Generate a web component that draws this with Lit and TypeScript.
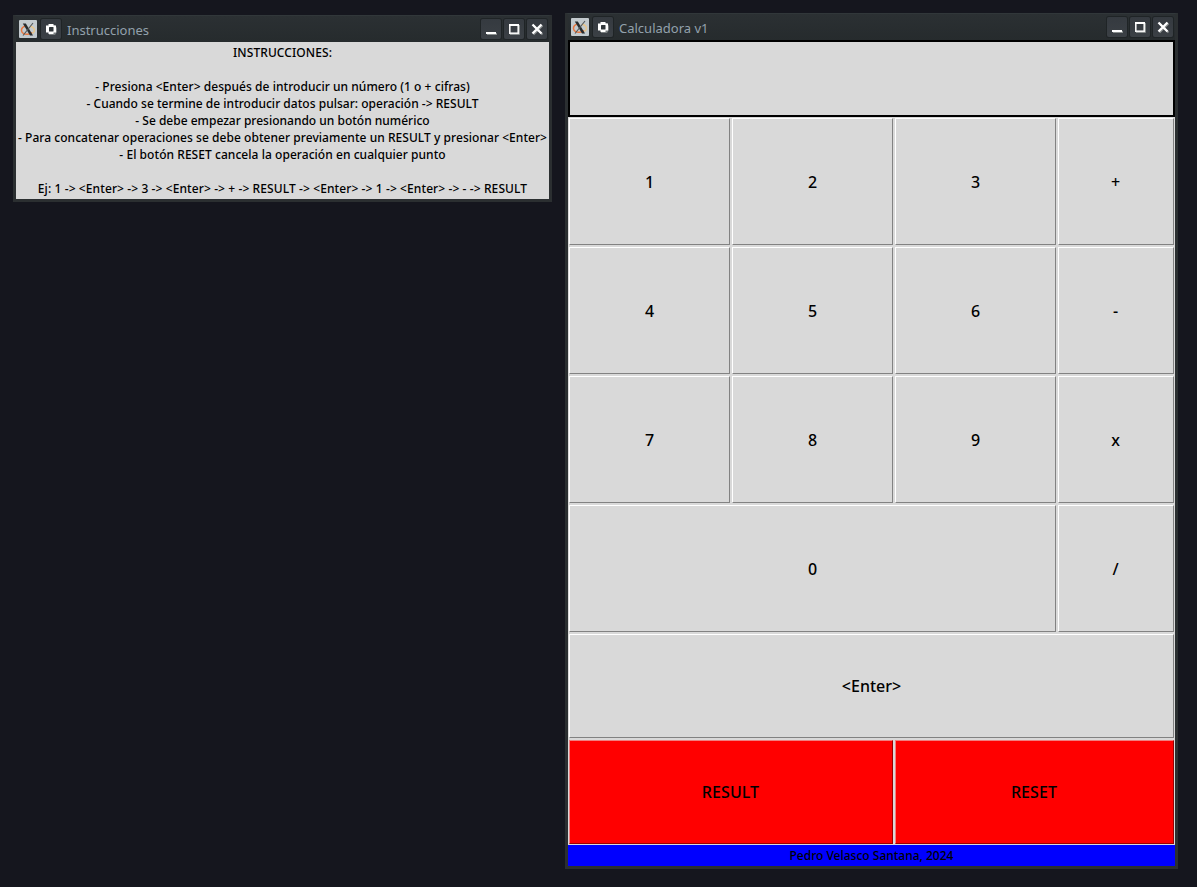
import { LitElement, html, css, svg } from "lit";
import { customElement, property } from "lit/decorators.js";
import { styleMap } from "lit/directives/style-map.js";

@customElement("x-window")
class XWindow extends LitElement {
  @property() caption = "";

  static styles = css`
    :host {
      display: block;
      box-sizing: border-box;
      background: #292e30;
      border: solid #2b2f31;
      border-width: 0 3px 3px;
      border-top: 1px solid #31373a;
    }
    .bar {
      display: flex;
      align-items: center;
      height: 26px;
      box-sizing: border-box;
      padding: 3px 2px 3px 3px;
      background: linear-gradient(#2b3033, #262b2d);
      color: #93a1ac;
      font: 13px/20px "Noto Sans", sans-serif;
    }
    svg {
      display: block;
      flex: none;
    }
    .logo {
      margin-right: 4px;
    }
    .caption {
      flex: 1;
      padding: 2px 0 0 6px;
      white-space: nowrap;
    }
    .tools {
      display: flex;
      gap: 3px;
    }
    .tool {
      width: 20px;
      height: 20px;
      box-sizing: border-box;
      border-radius: 2px;
      background: linear-gradient(#353a40, #3b4045);
      box-shadow: 0 0 0 1px #1f2426;
    }
  `;

  private tool(shape: unknown) {
    return html`<div class="tool"><svg width="20" height="20" viewBox="0 0 20 20">${shape}</svg></div>`;
  }

  render() {
    return html`
      <div class="bar">
        <svg class="logo" width="18" height="18" viewBox="0 0 18 18">
          <rect width="18" height="18" rx="1" fill="#c3cace" />
          <path d="M7 6Q2.2 7 2.5 10.5Q3 14.5 8.5 14.3Q12 14 13 12.5" fill="none" stroke="#e9773f" stroke-width="1.5" />
          <path d="M11 6.3Q16.3 7.5 15.3 11.5L13.5 13.5" fill="none" stroke="#e8c58c" stroke-width="1.5" />
          <path d="M3.8 3.5H6.8L14 15.5H11Z" fill="#272b2d" />
          <path d="M14 3L4 15.5" stroke="#53595b" stroke-width="1.2" />
        </svg>
        ${this.tool(svg`
          <path d="M8 6h6l2 3v4l-2 3H8z" fill="#777c7e"/>
          <path d="M7.5 5h5v1.5H15v7h-2.500V15h-5v-1.500H5v-7h2.500z" fill="#fff"/>
          <rect x="8" y="8" width="4.500" height="4.500" rx="0.500" fill="#30363a"/>`)}
        <div class="caption">${this.caption}</div>
        <div class="tools">
          ${this.tool(svg`
            <rect x="6" y="14" width="10" height="2" fill="#888d8d"/>
            <rect x="5" y="13" width="10" height="2" fill="#fff"/>`)}
          ${this.tool(svg`
            <path d="M6 15.5h9.5V6" fill="none" stroke="#888d8d"/>
            <rect x="5.8" y="6" width="8.4" height="8.2" fill="none" stroke="#f4f4f4" stroke-width="1.6"/>
            <rect x="5" y="5" width="10" height="2" fill="#fff"/>`)}
          ${this.tool(svg`
            <path d="M6.5 6.5L15.5 15.5M15.5 6.5L6.5 15.5" stroke="#888d8d" stroke-width="1.8"/>
            <path d="M5.5 5.5L14.5 14.5M14.5 5.5L5.5 14.5" stroke="#fff" stroke-width="2.3"/>`)}
        </div>
      </div>
      <slot></slot>
    `;
  }
}

// Each line with its tracking in pixels.
const LINES: [string, number][] = [
  ["INSTRUCCIONES:", 0.08],
  ["", 0],
  ["- Presiona <Enter> después de introducir un número (1 o + cifras)", 0.047],
  ["- Cuando se termine de introducir datos pulsar: operación -> RESULT", 0.02],
  ["- Se debe empezar presionando un botón numérico", 0],
  ["- Para concatenar operaciones se debe obtener previamente un RESULT y presionar <Enter>", 0.047],
  ["- El botón RESET cancela la operación en cualquier punto", 0.05],
  ["", 0],
  ["Ej: 1 -> <Enter> -> 3 -> <Enter> -> + -> RESULT -> <Enter> -> 1 -> <Enter> -> - -> RESULT", 0.1],
];

const KEYS = ["1", "2", "3", "+", "4", "5", "6", "-", "7", "8", "9", "x", "0", "/", "<Enter>", "RESULT", "RESET"];
const KIND: Record<string, string> = {
  "+": "op",
  "-": "op",
  x: "op",
  "/": "op",
  "0": "zero",
  "<Enter>": "enter",
  RESULT: "red",
  RESET: "red",
};

@customElement("app-root")
class AppRoot extends LitElement {
  static styles = css`
    :host {
      display: flex;
      align-items: flex-start;
      gap: 13px;
      box-sizing: border-box;
      width: 1197px;
      height: 887px;
      padding: 13px 0 0 13px;
      overflow: hidden;
      background: #15161e;
      color: #000;
      font-family: "Noto Sans", sans-serif;
      font-weight: 500;
    }
    .help {
      width: 539px;
      margin-top: 2px;
    }
    .calc {
      width: 613px;
    }
    .text {
      height: 157px;
      box-sizing: border-box;
      padding-top: 2px;
      background: #d9d9d9;
      font-size: 12px;
      line-height: 17px;
      text-align: center;
    }
    .line {
      height: 17px;
      white-space: pre;
    }
    .display {
      height: 77px;
      box-sizing: border-box;
      border: 2px solid #000;
      background: #d9d9d9;
    }
    .keys {
      display: grid;
      grid-template-columns: repeat(3, 161px) 116px;
      grid-template-rows: repeat(4, 127px) 104px 104px;
      gap: 2px;
      padding: 1px;
      background: #d9d9d9;
    }
    .key {
      box-sizing: border-box;
      margin: 0;
      padding: 0;
      border: 1px solid;
      border-color: #fff #828282 #828282 #fff;
      border-radius: 0;
      background: #d9d9d9;
      color: #000;
      font: 500 16px/22px "Noto Sans", sans-serif;
    }
    .op {
      padding-right: 1px;
    }
    .zero {
      grid-column: span 3;
    }
    .enter {
      grid-column: span 4;
    }
    .red {
      grid-column: span 2;
      padding-right: 1px;
      background: #f00;
      border-color: #f08080 #990000 #990000 #f08080;
      letter-spacing: 0.1px;
    }
    .footer {
      height: 21px;
      background: #00f;
      font-size: 12px;
      line-height: 21px;
      text-align: center;
    }
  `;

  render() {
    return html`
      <x-window class="help" caption="Instrucciones">
        <div class="text">
          ${LINES.map(([l, s]) => html`<div class="line" style=${styleMap({ letterSpacing: `${s}px` })}>${l}</div>`)}
        </div>
      </x-window>
      <x-window class="calc" caption="Calculadora v1">
        <div class="display"></div>
        <div class="keys">
          ${KEYS.map((k) => html`<button class="key ${KIND[k] ?? ""}">${k}</button>`)}
        </div>
        <div class="footer">Pedro Velasco Santana, 2024</div>
      </x-window>
    `;
  }
}
